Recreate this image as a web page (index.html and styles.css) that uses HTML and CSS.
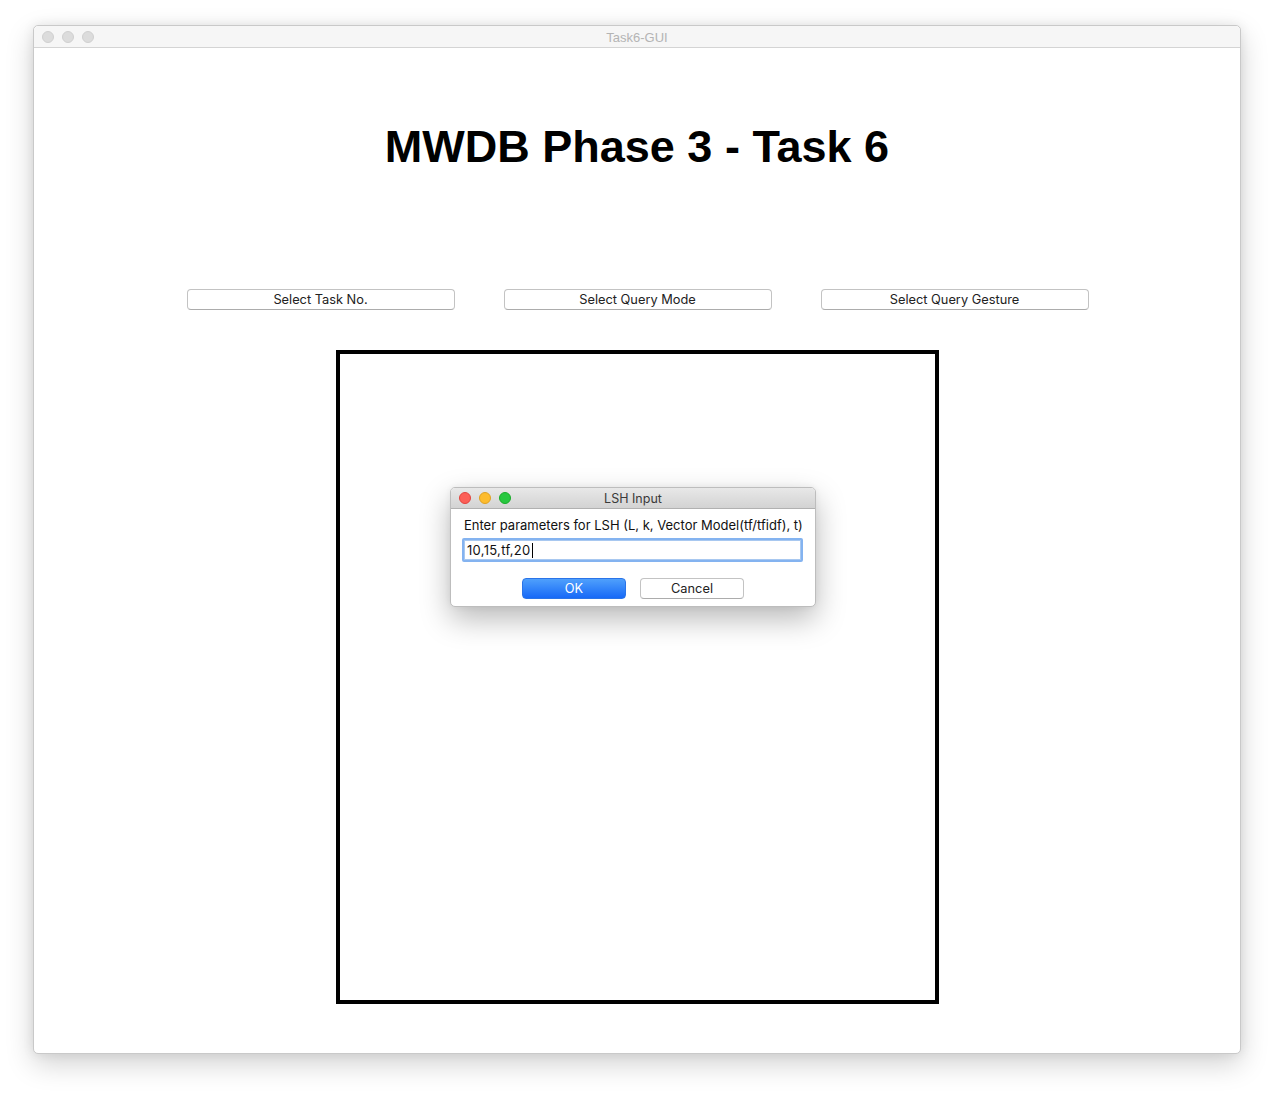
FILE: index.html
```html
<!DOCTYPE html>
<html>
<head>
<meta charset="utf-8">
<title>Task6-GUI</title>
<link rel="stylesheet" href="styles.css">
</head>
<body>
<div class="stage">
  <div class="window">
    <div class="titlebar">
      <div class="lights">
        <span class="light gray"></span>
        <span class="light gray"></span>
        <span class="light gray"></span>
      </div>
      <div class="wtitle">Task6-GUI</div>
    </div>
    <div class="content">
      <h1 class="heading">MWDB Phase 3 - Task 6</h1>
      <div class="btnrow">
        <button class="pbtn">Select Task No.</button>
        <button class="pbtn">Select Query Mode</button>
        <button class="pbtn">Select Query Gesture</button>
      </div>
      <div class="canvas"></div>
    </div>

    <div class="dialog">
      <div class="dtitlebar">
        <div class="lights dl">
          <span class="light red"></span>
          <span class="light yellow"></span>
          <span class="light green"></span>
        </div>
        <div class="dtitle">LSH Input</div>
      </div>
      <div class="dbody">
        <div class="dlabel">Enter parameters for LSH (L, k, Vector Model(tf/tfidf), t)</div>
        <div class="dinput"><span>10,15,tf,20</span><span class="caret"></span></div>
        <div class="dbtns">
          <button class="dbtn ok">OK</button>
          <button class="dbtn cancel">Cancel</button>
        </div>
      </div>
    </div>
  </div>
</div>
</body>
</html>
```

FILE: styles.css
```css
* { box-sizing: border-box; }
html, body { margin: 0; padding: 0; background: #ffffff; }
body {
  font-family: Inter, "Liberation Sans", Arial, sans-serif;
  width: 1274px;
  height: 1096px;
  overflow: hidden;
}
.stage {
  padding: 25px 33px 0 33px;
}
.window {
  position: relative;
  width: 1208px;
  height: 1029px;
  background: #ffffff;
  border-radius: 5px;
  border: 1px solid #c9c9c9;
  box-shadow: 0 10px 28px rgba(0,0,0,0.18), 0 0 12px rgba(0,0,0,0.08);
}
.titlebar {
  height: 22px;
  background: #f6f6f6;
  border-bottom: 1px solid #d4d4d4;
  border-radius: 5px 5px 0 0;
  display: flex;
  align-items: center;
  position: relative;
}
.lights {
  display: flex;
  gap: 8px;
  padding-left: 8px;
}
.light {
  width: 12px;
  height: 12px;
  border-radius: 50%;
  display: block;
}
.light.gray { background: #dcdcdc; border: 1px solid #d0d0d0; }
.light.red { background: #fc5f57; border: 1px solid #e0443e; }
.light.yellow { background: #fdbc2e; border: 1px solid #dea123; }
.light.green { background: #28c840; border: 1px solid #1aab29; }
.wtitle {
  position: absolute;
  left: 0; right: 0;
  top: 1px;
  text-align: center;
  font-family: "Liberation Sans", Arial, sans-serif;
  font-size: 13px;
  color: #b4b4b4;
  line-height: 22px;
}
.content {
  padding-top: 71px;
  display: flex;
  flex-direction: column;
  align-items: center;
}
.heading {
  margin: 0;
  font-family: "Liberation Sans", Arial, sans-serif;
  font-weight: bold;
  font-size: 45px;
  line-height: 56px;
  color: #000;
  text-align: center;
}
.btnrow {
  margin-top: 114px;
  display: flex;
  gap: 49px;
  justify-content: center;
  padding-left: 1px;
}
.pbtn {
  width: 268px;
  height: 21px;
  background: #ffffff;
  border: 1px solid #c3c3c3;
  border-bottom-color: #acacac;
  border-radius: 4px;
  font-family: Inter, "Liberation Sans", Arial, sans-serif;
  font-size: 12.8px;
  color: #222;
  padding: 0;
  line-height: 19px;
}
.canvas {
  margin-top: 40px;
  width: 603px;
  height: 654px;
  border: 4px solid #000;
  background: #fff;
}
.dialog {
  position: absolute;
  left: 416px;
  top: 461px;
  width: 366px;
  height: 120px;
  background: #ffffff;
  border: 1px solid #bdbdbd;
  border-radius: 5px;
  box-shadow: 0 12px 30px rgba(0,0,0,0.28), 0 0 6px rgba(0,0,0,0.06);
  overflow: hidden;
}
.dtitlebar {
  height: 21px;
  background: linear-gradient(#e8e8e8, #d3d3d3);
  border-bottom: 1px solid #b1b1b1;
  display: flex;
  align-items: center;
  position: relative;
}
.dl { padding-left: 8px; }
.dtitle {
  position: absolute;
  left: 0; right: 0;
  text-align: center;
  font-family: Inter, "Liberation Sans", Arial, sans-serif;
  font-size: 12.5px;
  color: #3a3a3a;
  line-height: 21px;
}
.dbody {
  padding: 8px 11px 0 11px;
}
.dlabel {
  font-size: 13px;
  color: #111;
  line-height: 17px;
  padding-left: 2px;
  white-space: nowrap;
}
.dinput {
  margin-top: 4px;
  width: 341px;
  height: 24px;
  border: 2px solid #84b3f0;
  border-radius: 2px;
  box-shadow: inset 0 0 0 1px #a8c8f0;
  font-size: 13px;
  letter-spacing: 0.3px;
  color: #111;
  line-height: 20px;
  padding-left: 3px;
  display: flex;
  align-items: center;
}
.caret {
  display: inline-block;
  width: 1px;
  height: 15px;
  background: #000;
  margin-left: 1px;
}
.dbtns {
  margin-top: 16px;
  display: flex;
  justify-content: center;
  gap: 14px;
}
.dbtn {
  width: 104px;
  height: 21px;
  border-radius: 4px;
  font-family: Inter, "Liberation Sans", Arial, sans-serif;
  font-size: 12.8px;
  padding: 0;
  line-height: 19px;
}
.dbtn.ok {
  background: linear-gradient(#4fa0fc, #1769f7);
  border: 1px solid #2a74e8;
  color: #fff;
}
.dbtn.cancel {
  background: #fff;
  border: 1px solid #c3c3c3;
  border-bottom-color: #acacac;
  color: #222;
}
```
